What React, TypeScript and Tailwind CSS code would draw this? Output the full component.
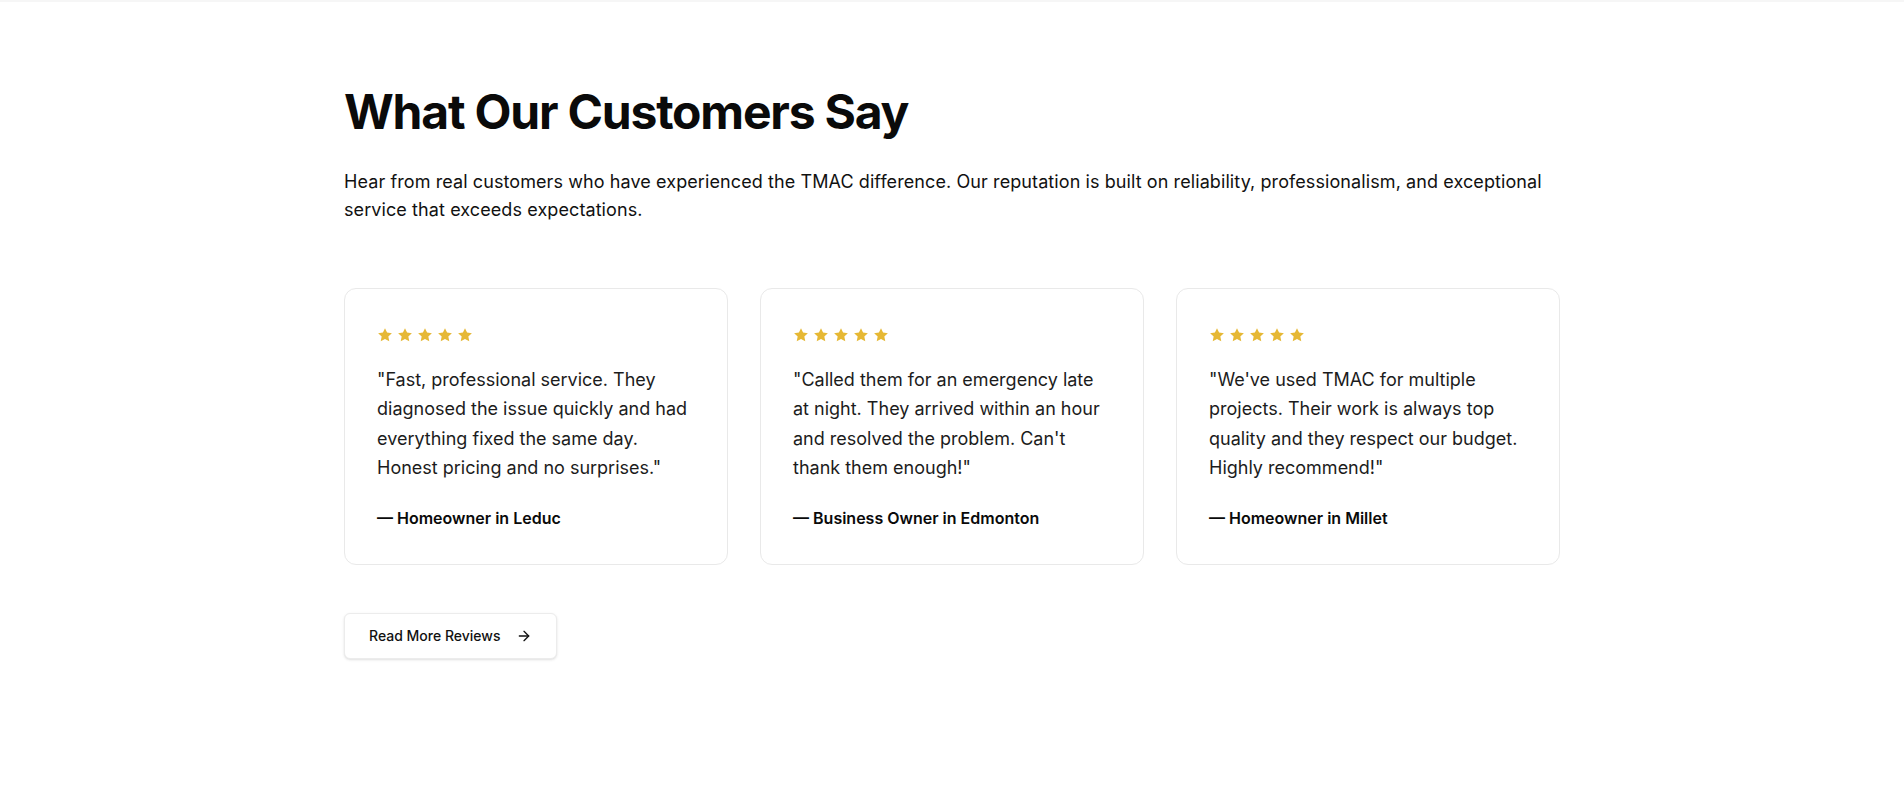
import React from "react";
import { ArrowRight } from "lucide-react";

type Review = {
  quote: string;
  author: string;
};

const reviews: Review[] = [
  {
    quote:
      '"Fast, professional service. They diagnosed the issue quickly and had everything fixed the same day. Honest pricing and no surprises."',
    author: "Homeowner in Leduc",
  },
  {
    quote:
      '"Called them for an emergency late at night. They arrived within an hour and resolved the problem. Can\'t thank them enough!"',
    author: "Business Owner in Edmonton",
  },
  {
    quote:
      '"We\'ve used TMAC for multiple projects. Their work is always top quality and they respect our budget. Highly recommend!"',
    author: "Homeowner in Millet",
  },
];

function StarIcon() {
  return (
    <svg viewBox="0 0 24 24" className="h-4 w-4 fill-[#e6b834]">
      <path d="M12 1.8l3.1 6.6 7.2.9-5.3 5 1.4 7.1L12 17.9l-6.4 3.5 1.4-7.1-5.3-5 7.2-.9z" />
    </svg>
  );
}

function ReviewCard({ review }: { review: Review }) {
  return (
    <div className="flex flex-col rounded-xl border border-[#e9e9e9] bg-white px-8 pb-[34px] pt-8">
      <div className="mb-4 flex h-7 items-center gap-1">
        {[0, 1, 2, 3, 4].map((i) => (
          <StarIcon key={i} />
        ))}
      </div>
      <p className="mb-6 text-lg leading-relaxed text-[#1c1c1c]">{review.quote}</p>
      <p className="text-base font-semibold text-[#0a0a0a]">— {review.author}</p>
    </div>
  );
}

export default function App() {
  return (
    <div
      className="min-h-screen border-t-2 border-[#f6f6f6] bg-white"
      style={{ fontFamily: "Inter, 'Noto Sans', sans-serif" }}
    >
      <section className="mx-auto max-w-7xl px-8 pb-20 pt-[86px]">
        <h2 className="mb-8 text-5xl font-bold tracking-tight text-[#0a0a0a]">
          What Our Customers Say
        </h2>
        <p className="mb-16 text-lg tracking-[0.005em] text-[#111111]">
          Hear from real customers who have experienced the TMAC difference. Our reputation is built on
          reliability, professionalism, and exceptional service that exceeds expectations.
        </p>

        <div className="grid grid-cols-3 gap-8">
          {reviews.map((review) => (
            <ReviewCard key={review.author} review={review} />
          ))}
        </div>

        <button className="mt-12 inline-flex items-center gap-4 rounded-md border border-[#ececec] bg-white px-6 py-3 text-sm font-medium text-[#111111] shadow-sm">
          Read More Reviews
          <ArrowRight className="h-4 w-4" strokeWidth={2} />
        </button>
      </section>
    </div>
  );
}
